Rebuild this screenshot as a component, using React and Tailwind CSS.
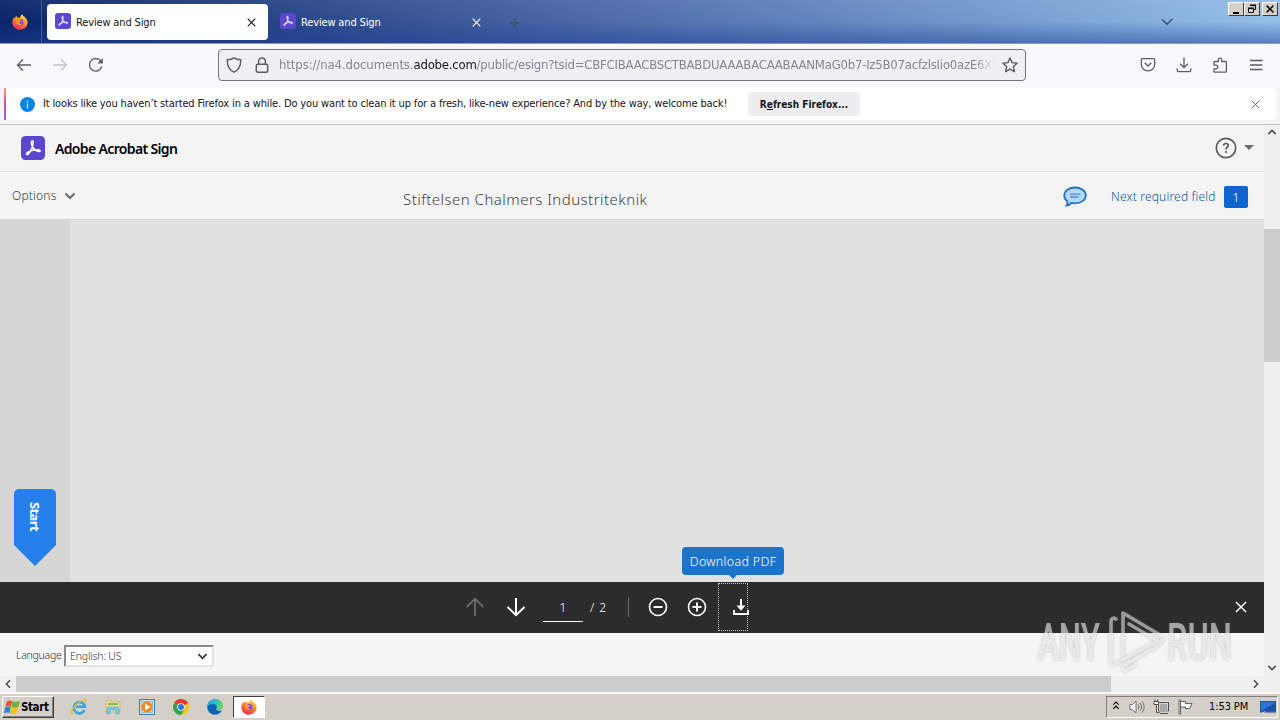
// Review and Sign: Firefox window on a classic Windows desktop, Acrobat Sign page inside

import clsx from 'clsx';

// === DATA ===

const TABS = [
  { id: 'a', title: 'Review and Sign', active: true },
  { id: 'b', title: 'Review and Sign', active: false },
];

const UI = "font-['DejaVu_Sans_Condensed','DejaVu_Sans',sans-serif]";
const PAGE = "font-['Noto_Sans','Open_Sans',sans-serif]";

// === ICONS ===

function Icon({ className, box = 16, width = 1.3, children }) {
  return (
    <svg viewBox={`0 0 ${box} ${box}`} fill="none" stroke="currentColor" strokeWidth={width} className={clsx('shrink-0', className)}>
      {children}
    </svg>
  );
}

function FirefoxLogo({ className }) {
  return (
    <svg viewBox="0 0 16 16" className={clsx('shrink-0', className)}>
      <defs>
        <linearGradient id="fx" x1="0.8" y1="0" x2="0.3" y2="1">
          <stop offset="0" stopColor="#ffe94a" />
          <stop offset="0.45" stopColor="#ff9022" />
          <stop offset="1" stopColor="#f5255d" />
        </linearGradient>
      </defs>
      <path d="M10.2.2c.6 1.3 1.9 2 3 3.2C15 5.300 15.800 7 15.600 9c-.4 4-3.700 6.700-7.600 6.700C3.700 15.700.4 12.500.3 8.400.3 6.400 1 4.500 2.300 3l.4 1.300C3.300 3 4 2.300 4.600 1.900l.4 1.700c1-.3 2.100-.2 3 .2C8.400 2.300 9 1 10.200.2z" fill="url(#fx)" />
      <circle cx="8.200" cy="8.200" r="3.300" fill="#8a4be0" />
      <path d="M4 5.200c1.200-.3 2.600 0 3.400.9.9.1 1.500.3 1.700.8-.6.8-1.800.8-2 1.700-.1 1.200 1.400 1.800 2.700 1.200-.8 1.600-3.300 1.900-4.700.3C4 9 3.700 7 4 5.200z" fill="#ff9a2a" />
    </svg>
  );
}

function AcrobatLogo({ className }) {
  return (
    <svg viewBox="0 0 24 24" className={clsx('shrink-0', className)}>
      <rect width="24" height="24" rx="4.500" fill="#5a47ce" />
      <path
        d="M5.600 18.400c-.9-1 2-2.900 5.200-3.900 3.300-1 7.800-1.300 8.300.1.400 1.500-2.800 1.200-4.800-.6-2-1.800-3.900-4.900-4-7.800 0-1.700 1.800-1.800 1.900-.1.100 2.400-1.200 6.400-2.700 9-1.300 2.200-3 4.100-3.900 3.300z"
        fill="none"
        stroke="#fff"
        strokeWidth="1.500"
      />
    </svg>
  );
}

function Cross({ className, width = 1.2 }) {
  return (
    <Icon box={10} width={width} className={className}>
      <path d="M.8.8l8.400 8.400M9.200.8L.8 9.200" />
    </Icon>
  );
}

function Chevron({ className, width = 2 }) {
  return (
    <Icon box={12} width={width} className={className}>
      <path d="M1.500 3.500L6 8l4.500-4.500" />
    </Icon>
  );
}

// === BROWSER CHROME ===

function WindowButton({ children, className }) {
  return (
    <div className={clsx('flex h-[14px] w-4 items-center justify-center border border-t-white border-l-white border-r-[#404040] border-b-[#404040] bg-[#d4d0c8] text-black', className)}>
      {children}
    </div>
  );
}

function Tab({ title, active }) {
  return (
    <div className={clsx('flex h-9 w-[221px] items-center rounded-[4px] pl-2', active ? 'bg-white text-[#15141a]' : 'text-white')}>
      <AcrobatLogo className="h-4 w-4 -translate-y-px" />
      <span className="ml-[5px] flex-1 pt-[3px] text-[11px] tracking-[-0.15px]">{title}</span>
      <Cross className="mr-[12px] h-[9px] w-[9px]" />
    </div>
  );
}

function TabBar() {
  return (
    <div className="relative flex h-[43px] bg-linear-to-r from-[#0a246a] via-[#4a68a6] via-45% to-[#95bfea]">
      <div className="absolute inset-0 bg-linear-to-b from-white/5 via-transparent to-[#1c3f96]/50" />
      <div className="relative flex w-[42px] items-center justify-center border-r border-[#5a6ea6]/70 pr-px">
        <FirefoxLogo className="h-4 w-4" />
      </div>
      <div className="relative flex flex-1 gap-1 pt-1 pl-[5px]">
        {TABS.map(t => <Tab key={t.id} {...t} />)}
        <Icon box={10} width={1.3} className="mt-[14px] ml-[13px] h-[10px] w-[10px] text-[#424a58]/80">
          <path d="M5 0v10M0 5h10" />
        </Icon>
      </div>
      <Chevron width={1.2} className="relative mt-[15px] mr-[54px] h-[14px] w-[14px] text-[#33517c]" />
      <div className="relative flex pt-[2px] pr-[2px]">
        <WindowButton><span className="mt-[7px] h-[2px] w-[6px] bg-black" /></WindowButton>
        <WindowButton>
          <Icon box={10} width={1} className="h-[10px] w-[10px]">
            <path d="M3.500 1.500h5v4h-2M3 1h6M1.500 4.500h5v4h-5zM1 4h6" />
          </Icon>
        </WindowButton>
        <WindowButton className="ml-[2px]"><Cross width={1.9} className="h-2 w-2" /></WindowButton>
      </div>
    </div>
  );
}

function NavBar() {
  return (
    <div className="flex h-[45px] items-center border-t border-[#8d99b5] bg-[#f9f9fb] pb-[3px] text-[#5b5b66]">
      <Icon className="ml-4 h-4 w-4">
        <path d="M15 8H1.500M7 2.500L1.500 8 7 13.500" />
      </Icon>
      <Icon className="ml-5 h-4 w-4 text-[#c3c3c9]">
        <path d="M1 8h13.500M9 2.500L14.500 8 9 13.500" />
      </Icon>
      <Icon className="ml-5 h-4 w-4">
        <path d="M13.800 9.500A6.300 6.300 0 1 1 12.600 3.800" />
        <path d="M14.800 1v5.500H9.300z" fill="currentColor" stroke="none" />
      </Icon>
      <div className="ml-[114px] flex h-8 w-[808px] items-center rounded-[4px] border border-[#73737c] bg-[#f0f0f4] pl-[7px]">
        <Icon className="h-4 w-4" width={1.4}>
          <path d="M8 .8c2 1.300 4.200 1.800 6.700 1.900.2 5.500-1.800 10.500-6.700 12.500C3.100 13.200 1.100 8.200 1.300 2.700 3.800 2.600 6 2.100 8 .8z" />
        </Icon>
        <Icon className="ml-3 h-4 w-4" width={1.5}>
          <rect x="2.300" y="7.200" width="11.400" height="8" rx="1.500" />
          <path d="M4.600 7V4.300a3.400 3.400 0 0 1 6.800 0V7" />
        </Icon>
        <div className="ml-[9px] w-[716px] overflow-hidden mask-r-from-97% mask-r-to-100% text-[13px] tracking-[-0.22px] whitespace-nowrap text-[#85858c]">
          <span className="tracking-[-0.09px]">https://na4.documents.</span>
          <span className="text-[#15141a]">adobe.com</span>/public/esign?tsid=CBFCIBAACBSCTBABDUAAABACAABAANMaG0b7-Iz5B07acfzlsIio0azE6XY
        </div>
        <Icon className="ml-[7px] h-4 w-4" width={1.4}>
          <path d="M8 1l2.100 4.600 5 .6-3.700 3.400 1 5L8 12.100l-4.400 2.500 1-5L.9 6.200l5-.6z" strokeLinejoin="round" />
        </Icon>
      </div>
      <div className="flex flex-1 items-center justify-end gap-5 pr-4">
        <Icon className="h-4 w-4">
          <path d="M1.300 2.700a1 1 0 0 1 1-1h11.400a1 1 0 0 1 1 1v4.500a6.700 6.700 0 0 1-13.400 0zM4.700 5.800L8 9l3.300-3.200" />
        </Icon>
        <Icon className="h-4 w-4">
          <path d="M8 .5v10M4 6.700l4 4 4-4M1.200 11.500v1.700c0 .8.600 1.400 1.400 1.400h10.800c.8 0 1.400-.6 1.400-1.400v-1.700" />
        </Icon>
        <Icon className="h-4 w-4">
          <path d="M2 7V5.500c0-.6.400-1 1-1h3.400V2.800a1.700 1.700 0 0 1 3.400 0v1.700h3.600c.6 0 1 .4 1 1v8.700c0 .6-.4 1-1 1H3c-.6 0-1-.4-1-1v-2.400h2a1.700 1.700 0 0 0 0-3.600H2z" />
        </Icon>
        <Icon className="h-4 w-4">
          <path d="M2 3.500h12.500M2 8h12.500M2 12.500h12.500" />
        </Icon>
      </div>
    </div>
  );
}

function Notification() {
  return (
    <div className="flex h-[37px] flex-col border-b border-[#c4c4c8] bg-[#f4f4f5]">
      <div className="mr-1 ml-1 flex h-8 items-center rounded-r bg-white text-[11px] text-[#15141a]">
        <div className="h-8 w-[2px] bg-linear-to-b from-[#ff9a6a] via-[#e0409a] to-[#9059ff]" />
        <svg viewBox="0 0 16 16" className="ml-[14px] h-[15px] w-[15px]">
          <circle cx="8" cy="8" r="8" fill="#0a84e0" />
          <path d="M8 7v5M8 4v1.500" stroke="#fff" strokeWidth="1.300" />
        </svg>
        <span className="ml-2 w-[684px] tracking-[-0.147px] whitespace-nowrap">
          It looks like you haven’t started Firefox in a while. Do you want to clean it up for a fresh, like-new experience? And by the way, welcome back!
        </span>
        <button className="ml-[21px] h-6 w-[112px] rounded-[4px] bg-[#ededf0] text-[10px] font-bold">
          R<u>e</u>fresh Firefox...
        </button>
        <Cross width={1} className="mr-[16px] ml-auto h-[9px] w-[9px] text-[#5b5b66]" />
      </div>
    </div>
  );
}

// === ACROBAT SIGN PAGE ===

function PageHeader() {
  return (
    <>
      <header className="flex h-[47px] items-center border-b border-[#e2e2e2] pb-px pl-[21px]">
        <AcrobatLogo className="h-6 w-6" />
        <h1 className="ml-[10px] flex-1 pt-[2px] text-[14px] font-semibold tracking-[-0.65px] text-black">Adobe Acrobat Sign</h1>
        <Icon box={22} width={1.7} className="h-[22px] w-[22px] text-[#5c5c5c]">
          <circle cx="11" cy="11" r="9.700" />
          <path d="M8.600 8.700c0-1.500 1.100-2.200 2.400-2.200 1.400 0 2.300.8 2.300 2 0 1.700-2.300 1.800-2.300 3.900M11 14v2" />
        </Icon>
        <svg viewBox="0 0 10 5" className="mr-[10px] ml-[7px] h-[5px] w-[10px] fill-[#6b6b6b]"><path d="M0 0h10L5 5z" /></svg>
      </header>
      <div className="flex h-12 items-center border-b border-[#d8d8d8] pl-3 text-[#3f3f3f]">
        <span className="w-[45px] text-[12px] font-light tracking-[0.2px]">Options</span>
        <Chevron className="ml-[7px] h-3 w-3 text-[#6b6b6b]" />
        <div className="ml-[327px] w-[245px] pt-[7px] text-[15px] font-light tracking-[0.47px] whitespace-nowrap">Stiftelsen Chalmers Industriteknik</div>
        <svg viewBox="0 0 24 22" className="ml-[414px] h-[22px] w-6 translate-x-px translate-y-px">
          <path d="M12 1.500c6 0 10.800 3.400 10.800 8S18 17.300 12 17.300c-1.300 0-2.500-.1-3.600-.4-1.300 1.600-3 2.600-4.900 2.800.7-1.200 1.100-2.600.9-4.300C2.400 14 1.300 11.800 1.300 9.500c0-4.600 4.700-8 10.700-8z" fill="#b4d9f8" stroke="#2a72bd" strokeWidth="1.800" />
          <path d="M7 8.200h10.500M7 11h8.500" stroke="#4b8bc9" strokeWidth="1.300" />
        </svg>
        <span className="ml-[25px] w-[106px] pt-[2px] text-[12px] font-light tracking-[0.18px] whitespace-nowrap text-[#0a55ad]">Next required field</span>
        <span className="mt-[3px] ml-[7px] flex h-[22px] w-6 items-center justify-center rounded-[2px] bg-[#0d66d0] pt-px text-[12px] font-light text-white">1</span>
      </div>
    </>
  );
}

function StartFlag() {
  return (
    <div className="relative mt-[269px] ml-[14px] h-[77px] w-[42px]">
      <svg viewBox="0 0 42 77" className="h-full w-full">
        <path d="M5 0h32a5 5 0 0 1 5 5v51L21 77 0 56V5a5 5 0 0 1 5-5z" fill="#2680eb" />
      </svg>
      <span className="absolute top-[13px] left-[11px] text-[13px] leading-5 font-bold tracking-[-0.6px] text-white [writing-mode:vertical-rl]">Start</span>
    </div>
  );
}

function PdfToolbar() {
  return (
    <div className="relative flex h-[51px] items-center bg-[#2c2c2c] pb-px pl-[465px] text-white">
      <Icon box={20} width={1.8} className="h-5 w-5 text-[#6b6b6b]">
        <path d="M10 19V2M1.500 10L10 1.800l8.500 8.200" />
      </Icon>
      <Icon box={20} width={2} className="ml-[21px] h-5 w-5">
        <path d="M10 1v17M1.500 10l8.500 8.200 8.500-8.200" />
      </Icon>
      <div className="mt-[10px] ml-[17px] flex h-[30px] w-10 items-center justify-center self-start border-b border-white pt-[2px] text-[12px] font-light">1</div>
      <span className="ml-[7px] w-[19px] pt-[2px] text-[12px] font-light tracking-[1px] whitespace-pre">/ 2</span>
      <div className="ml-[19px] h-5 w-px bg-[#6a6a6a]" />
      <Icon box={20} width={1.6} className="ml-[19px] h-5 w-5">
        <circle cx="10" cy="10" r="8.500" />
        <path d="M5.500 10h9" strokeWidth="2" />
      </Icon>
      <Icon box={20} width={1.6} className="ml-[19px] h-5 w-5">
        <circle cx="10" cy="10" r="8.500" />
        <path d="M5.500 10h9M10 5.500v9" strokeWidth="2" />
      </Icon>
      <button className="ml-[11px] flex h-12 w-[30px] items-center border border-dotted border-[#c8c8c8]">
        <svg viewBox="0 0 16 17" className="ml-[14px] h-[17px] w-4 shrink-0 overflow-visible">
          <path d="M8 0v9M1 11v4h14v-4" fill="none" stroke="#fff" strokeWidth="2" />
          <path d="M3.500 6.500h9L8 11.800z" fill="#fff" />
        </svg>
      </button>
      <Cross width={1.2} className="mr-[17px] ml-auto h-3 w-3" />

      {/* tooltip */}
      <div className="absolute -top-[35px] left-[682px] flex h-7 w-[102px] items-center justify-center rounded-[4px] bg-[#1b74cc] pt-[2px] text-[12.5px] font-light tracking-[0.3px] whitespace-nowrap">
        Download PDF
        <svg viewBox="0 0 8 4" className="absolute top-7 left-[47px] h-1 w-2 fill-[#1b74cc]"><path d="M0 0h8L4 4z" /></svg>
      </div>
    </div>
  );
}

function Watermark() {
  return (
    <svg viewBox="0 0 200 68" className="absolute top-[607px] left-[1036px] h-[68px] w-[200px] [filter:drop-shadow(0_0_1.500px_rgba(90,90,90,.6))]">
      <g fill="none" stroke="#fff" strokeOpacity="0.5" strokeWidth="3.600" strokeLinejoin="round" strokeLinecap="round">
        <path d="M80 12c-2-2-5-.5-5 3v40c0 3 2 3 4 2l43-23" />
        <path d="M87 49V6l37 22c4 2 4 4 1 6" />
        <path d="M93 17l27 16M124 37L90 57c-4 2-5 7 0 6l9-5" />
      </g>
      <g fill="#fff" fillOpacity="0.55" fontFamily="Roboto" fontWeight="500" fontSize="51">
        <text x="2" y="53" textLength="62" lengthAdjust="spacingAndGlyphs">ANY</text>
        <text x="131" y="53" textLength="65" lengthAdjust="spacingAndGlyphs">RUN</text>
      </g>
    </svg>
  );
}

function SignPage() {
  return (
    <div className={clsx('flex h-[567px]', PAGE)}>
      <main className="flex w-[1264px] flex-col bg-[#f4f4f4]">
        <PageHeader />
        <div className="flex h-[362px] bg-[#e1e1e1]">
          <div className="w-[70px] bg-[#d6d6d6]"><StartFlag /></div>
        </div>
        <PdfToolbar />
        <div className="flex h-[43px] items-center bg-[#f5f5f5] pl-4 text-[10.5px] font-light text-[#303030]">
          <span className="w-[44px] pt-[2px] tracking-[-0.25px]">Language</span>
          <div className="mt-[3px] ml-1 flex h-[22px] w-[150px] items-center justify-between border-2 border-t-[#8a8a8a] border-r-[#e3e3e3] border-b-[#e3e3e3] border-l-[#8a8a8a] bg-white pr-1 pl-1">
            <span className="pt-[2px] tracking-[-0.15px]">English: US</span>
            <Chevron width={1.8} className="h-[11px] w-[11px]" />
          </div>
        </div>
        <div className="flex h-4 items-center bg-[#f0f0f0] text-[#505050]">
          <Chevron className="mx-[3px] h-[10px] w-[10px] rotate-90" />
          <div className="h-4 w-[1095px] bg-[#cdcdcd]" />
          <Chevron className="mr-[3px] ml-auto h-[10px] w-[10px] -rotate-90" />
        </div>
      </main>
      <div className="flex w-4 flex-col items-center bg-[#f0f0f0] text-[#505050]">
        <Chevron className="mt-[2px] h-[10px] w-[10px] rotate-180" />
        <div className="mt-[92px] h-[133px] w-4 bg-[#cdcdcd]" />
        <Chevron className="mt-auto mb-[19px] h-[10px] w-[10px]" />
      </div>
    </div>
  );
}

// === TASKBAR ===

function IeIcon() {
  return (
    <svg viewBox="0 0 16 16" className="h-4 w-4 overflow-visible">
      <path d="M13.500 11a5.600 5.600 0 1 1 .4-3.200H5" fill="none" stroke="#39a5e0" strokeWidth="2.600" />
      <path d="M2 15C-2 14 4 5 10 2c3-1.700 6-1.600 5 1.500" fill="none" stroke="#e8b92c" strokeWidth="1.300" />
    </svg>
  );
}

function ExplorerIcon() {
  return (
    <svg viewBox="0 0 16 16" className="h-4 w-4">
      <path d="M1 3l1-1.500h4L7 3h8v10H1z" fill="#f2dc8c" stroke="#c8aa4c" strokeWidth=".6" />
      <path d="M3 5h10" stroke="#5fae5a" strokeWidth="1.500" />
      <path d="M2 15V9.500c0-.9.600-1.500 1.500-1.500h9c.9 0 1.500.6 1.500 1.500V15h-3v-4H5v4z" fill="#7cc7ea" stroke="#4e9cc4" strokeWidth=".5" />
    </svg>
  );
}

function MediaIcon() {
  return (
    <svg viewBox="0 0 16 16" className="h-4 w-4">
      <rect x=".5" y=".5" width="15" height="15" fill="#cfe3f2" stroke="#3e7cab" />
      <rect x="2.500" y="2.500" width="11" height="11" fill="none" stroke="#7aa9cb" strokeWidth=".7" />
      <circle cx="8" cy="8" r="5.500" fill="#f58a1a" />
      <path d="M6.200 4.800v6.400L11.500 8z" fill="#fff" />
    </svg>
  );
}

function ChromeIcon() {
  return (
    <svg viewBox="0 0 16 16" className="h-4 w-4">
      <circle cx="8" cy="8" r="8" fill="#fbc116" />
      <path d="M8 8L1.100 4A8 8 0 0 1 14.900 4z" fill="#e33b2e" />
      <path d="M8 8L1.100 4A8 8 0 0 0 8 16l3.500-6z" fill="#2da44f" />
      <path d="M8 4.200h6.900L14 2.800H8z" fill="#e33b2e" />
      <circle cx="8" cy="8" r="3.800" fill="#fff" />
      <circle cx="8" cy="8" r="3" fill="#2f74e0" />
    </svg>
  );
}

function EdgeIcon() {
  return (
    <svg viewBox="0 0 16 16" className="h-4 w-4">
      <defs>
        <linearGradient id="edge" x1="0" y1="0" x2="1" y2="0.300">
          <stop offset="0" stopColor="#1b9de2" />
          <stop offset="0.600" stopColor="#2fc3c8" />
          <stop offset="1" stopColor="#62d95a" />
        </linearGradient>
      </defs>
      <circle cx="8" cy="8" r="7.800" fill="#0f62b4" />
      <path d="M.2 8C.6 3.400 4 .2 8.200.2c4.500 0 7.700 3 7.700 6.300 0 2.600-2 4.200-4.300 4.200-1.900 0-2.300-.8-2.300-1.200s.6-.7.6-2C9.900 5.900 8.300 4.900 6 4.900 3.200 4.900 1 6.300.2 8z" fill="url(#edge)" />
      <path d="M9.300 9.500c-.2 1.900 2.600 3 5.200 1.700l1.500 1V7.500c-.8 2.300-2.400 3.200-4.400 3.200-1.500 0-2.100-.5-2.300-1.200z" fill="#d4d0c8" />
    </svg>
  );
}

function WindowsFlag() {
  return (
    <svg viewBox="0 0 16 16" className="h-[17px] w-[17px]">
      <path d="M2.500 2.500C4.300 1 6 1.200 7.700 2L6.500 7.400C5 6.600 3.200 6.600 1.300 7.700z" fill="#e8562a" />
      <path d="M8.100 2.200c1.800.9 4 .9 6.900-.5L13.700 7c-2 1.300-4.600 1.500-6.800.5z" fill="#6bb52c" />
      <path d="M1.100 8.200c1.900-1.200 3.800-1.200 5.300-.4L5.200 13.200c-1.700-.8-3.700-.7-5.200.4z" fill="#2e80d8" />
      <path d="M6.800 8c2 .9 4.400.9 6.700-.4L12.200 13c-2.200 1.400-4.600 1.500-6.700.5z" fill="#f7c21c" />
    </svg>
  );
}

function Taskbar() {
  return (
    <footer className="flex h-7 items-center border-t-2 border-[#fbfaf8] bg-[#d4d0c8] pl-[2px] text-black">
      <div className="flex h-[22px] w-[52px] items-center border border-t-white border-l-white border-r-[#404040] border-b-[#404040] pl-px shadow-[inset_-1px_-1px_0_#808080]">
        <WindowsFlag />
        <span className="pt-px text-[11.5px] font-bold tracking-[-0.4px]">Start</span>
      </div>
      <div className="ml-[17px] flex gap-[18px]">
        <IeIcon />
        <ExplorerIcon />
        <MediaIcon />
        <ChromeIcon />
        <EdgeIcon />
      </div>
      <div className="ml-[10px] flex h-[22px] w-8 items-center justify-center border border-t-[#404040] border-l-[#404040] border-r-white border-b-white bg-white">
        <FirefoxLogo className="h-4 w-4" />
      </div>
      <div className="mr-[2px] ml-auto flex h-[22px] w-[172px] items-center border border-t-[#808080] border-l-[#808080] border-r-white border-b-white pl-[6px]">
        <Icon box={8} width={1.5} className="-mt-1 h-[8px] w-[6px] overflow-visible">
          <path d="M.5 3.500l3.500-3.500 3.500 3.500M.5 9L4 5.500 7.500 9" />
        </Icon>
        <Icon width={1} className="ml-[10px] h-4 w-4 text-[#707070]">
          <path d="M1 5.500h2.500L7 2v12l-3.500-3.500H1z" fill="#fff" />
          <path d="M9 5.500c1.200 1.500 1.200 3.500 0 5M11 4c2 2.400 2 5.600 0 8M13 2.500c2.800 3.200 2.800 7.800 0 11" />
        </Icon>
        <Icon width={1} className="ml-2 h-4 w-4 text-[#505050]">
          <rect x="5.500" y="3.500" width="10" height="8.500" fill="#a9a9a9" stroke="#fff" strokeWidth="2" />
          <rect x="5.500" y="3.500" width="10" height="8.500" />
          <path d="M1 2.500h4.500v3H1z" fill="#fff" />
          <path d="M2 .5v2M4.500.5v2M3.500 5.500v8h3M7 14.500h8" />
        </Icon>
        <Icon width={1} className="ml-2 h-4 w-4 text-[#606060]">
          <path d="M2 1h1.500v14H2z" fill="#fff" />
          <path d="M3.500 2.500h5v2h6.500l-2.500 5H8.500v-1.500h-5z" fill="#fff" />
        </Icon>
        <span className="ml-4 w-10 pt-px text-[11px] tracking-[-0.1px] whitespace-nowrap">1:53 PM</span>
        <svg viewBox="0 0 16 13" className="ml-[11px] h-[13px] w-4">
          <rect x=".5" y=".5" width="15" height="10.500" fill="#2c74d6" stroke="#24508c" />
          <path d="M1 10L15 2v8z" fill="#1d50a8" />
          <path d="M2 12.500l3-2" stroke="#cde" />
        </svg>
      </div>
    </footer>
  );
}

// === APP ===

export default function App() {
  return (
    <div className={clsx('relative h-[720px] w-[1280px] overflow-hidden bg-white', UI)}>
      <TabBar />
      <NavBar />
      <Notification />
      <SignPage />
      <Taskbar />
      <Watermark />
    </div>
  );
}
